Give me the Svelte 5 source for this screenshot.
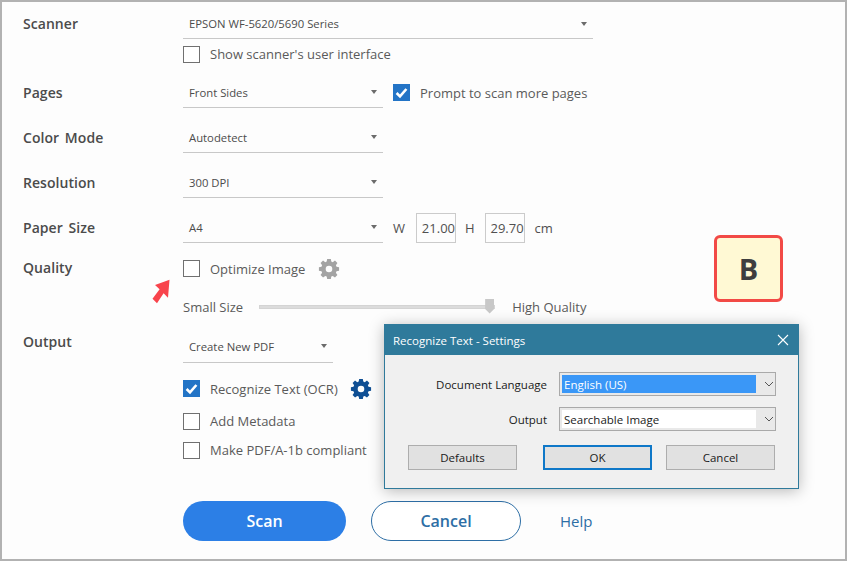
<script>
  const gear = "M10 1h4l.5 2.8 1.6.7 2.4-1.7 2.7 2.7-1.7 2.4.7 1.6 2.8.5v4l-2.8.5-.7 1.6 1.7 2.4-2.7 2.7-2.4-1.7-1.6.7-.5 2.8h-4l-.5-2.8-1.6-.7-2.4 1.7-2.7-2.7 1.7-2.4-.7-1.6-2.8-.5v-4l2.8-.5.7-1.6-1.7-2.4 2.7-2.7 2.4 1.7 1.6-.7zM12 8.4a3.6 3.6 0 1 0 0 7.2 3.6 3.6 0 0 0 0-7.2z";
</script>

{#snippet check(on, label)}
  <span class="check">
    <span class="box" class:on>
      {#if on}<svg viewBox="0 0 17 17" width="17" height="17"><path d="M3.6 9l3.4 3.4 6.4-7.4" fill="none" stroke="#fff" stroke-width="2.6"/></svg>{/if}
    </span>
    <span class="checklabel">{label}</span>
  </span>
{/snippet}

{#snippet select(text, cls)}
  <span class="select {cls}"><span>{text}</span><i class="caret"></i></span>
{/snippet}

<div class="frame">
  <div class="form">
    <div class="row r-scanner">
      <div class="label up1">Scanner</div>
      {@render select('EPSON WF-5620/5690 Series', 'wide')}
    </div>
    <div class="row r-ui">
      <div class="label"></div>
      {@render check(false, "Show scanner's user interface")}
    </div>
    <div class="row r-sel first">
      <div class="label">Pages</div>
      {@render select('Front Sides', 'mid')}
      <span class="after">{@render check(true, 'Prompt to scan more pages')}</span>
    </div>
    <div class="row r-sel">
      <div class="label">Color Mode</div>
      {@render select('Autodetect', 'mid')}
    </div>
    <div class="row r-sel">
      <div class="label">Resolution</div>
      {@render select('300 DPI', 'mid')}
    </div>
    <div class="row r-sel">
      <div class="label">Paper Size</div>
      {@render select('A4', 'mid')}
      <span class="dims">
        <span class="dim-l">W</span><span class="num">21.00</span>
        <span class="dim-h">H</span><span class="num">29.70</span>
        <span class="unit">cm</span>
      </span>
    </div>
    <div class="row r-quality">
      <div class="label up1">Quality</div>
      {@render check(false, 'Optimize Image')}
      <svg class="gear" viewBox="0 0 24 24" width="22" height="22"><path d={gear} fill="#a3a3a3" fill-rule="evenodd"/></svg>
    </div>
    <div class="row r-slider">
      <div class="label"></div>
      <span class="txt">Small Size</span>
      <span class="track"><i class="thumb"></i></span>
      <span class="txt">High Quality</span>
    </div>
    <div class="row r-output">
      <div class="label up2">Output</div>
      {@render select('Create New PDF', 'short')}
    </div>
    <div class="row r-ocr">
      <div class="label"></div>
      {@render check(true, 'Recognize Text (OCR)')}
      <svg class="gear blue" viewBox="0 0 24 24" width="22" height="22"><path d={gear} fill="#0f4f94" fill-rule="evenodd"/></svg>
    </div>
    <div class="row r-meta">
      <div class="label"></div>
      {@render check(false, 'Add Metadata')}
    </div>
    <div class="row r-pdfa">
      <div class="label"></div>
      {@render check(false, 'Make PDF/A-1b compliant')}
    </div>
    <div class="row r-actions">
      <div class="label"></div>
      <button class="btn scan">Scan</button>
      <button class="btn cancel">Cancel</button>
      <span class="help">Help</span>
    </div>
  </div>

  <div class="badge">B</div>

  <svg class="arrow a1" viewBox="0 0 20 26" width="20" height="29" preserveAspectRatio="none"><path d="M18.5 2.5 L17 18.5 L12.6 14.6 L6 23.5 L1.5 19.6 L8.6 11 L4 7.2 Z" fill="#f8444c"/></svg>
  <svg class="arrow a2" viewBox="0 0 24 18" width="24" height="18"><path d="M0 9 L13 1 V5.5 H23 V13 H13 V17.5 Z" fill="#f8444c"/></svg>

  <div class="dialog">
    <div class="titlebar">
      <span>Recognize Text - Settings</span>
      <svg viewBox="0 0 12 12" width="12" height="12"><path d="M1 1l10 10M11 1L1 11" stroke="#fff" stroke-width="1.1" fill="none"/></svg>
    </div>
    <div class="dbody">
      <div class="drow">
        <span class="dlabel">Document Language</span>
        <span class="combo"><span class="value sel">English (US)</span><svg viewBox="0 0 10 6" width="10" height="6"><path d="M1 1l4 4 4-4" stroke="#555" fill="none"/></svg></span>
      </div>
      <div class="drow two">
        <span class="dlabel">Output</span>
        <span class="combo"><span class="value">Searchable Image</span><svg viewBox="0 0 10 6" width="10" height="6"><path d="M1 1l4 4 4-4" stroke="#555" fill="none"/></svg></span>
      </div>
      <div class="dbtns">
        <button class="dbtn">Defaults</button>
        <button class="dbtn ok">OK</button>
        <button class="dbtn">Cancel</button>
      </div>
    </div>
  </div>
</div>

<style>
  :global(body) { margin: 0; background: #fff; }
  .frame {
    position: relative;
    width: 847px;
    height: 561px;
    box-sizing: border-box;
    background: #fdfdfd;
    border: 2px solid #b2b2b2;
    overflow: hidden;
    font-family: "Open Sans", "Noto Sans", sans-serif;
    font-size: 13px;
    color: #505050;
  }
  .form { padding: 0 0 0 21px; }
  .row { display: flex; align-items: center; }
  .label {
    width: 160px;
    flex: none;
    font-size: 14px;
    font-weight: 600;
    letter-spacing: .05px;
    word-spacing: 2px;
    color: #4b4b4b;
  }
  .up1 { position: relative; top: -1px; }
  .up2 { position: relative; top: -6px; }

  .select {
    box-sizing: border-box;
    flex: none;
    height: 30px;
    display: flex;
    align-items: center;
    justify-content: space-between;
    padding: 0 6px;
    border-bottom: 1px solid #c8c8c8;
    font-size: 11.3px;
    color: #4c4c4c;
  }
  .wide { width: 410px; }
  .mid { width: 200px; }
  .short { width: 150px; padding-bottom: 2px; }
  .caret {
    width: 0; height: 0;
    border: 3.5px solid transparent;
    border-top: 4px solid #6b6b6b;
    border-bottom: 0;
  }

  .check { display: inline-flex; align-items: center; }
  .box {
    box-sizing: border-box;
    width: 17px; height: 17px;
    border: 1px solid #707070;
    background: #fff;
    flex: none;
  }
  .box.on { background: #2374c6; border: 0; }
  .box svg { display: block; }
  .checklabel { margin-left: 10px; font-size: 13px; color: #5a5a5a; white-space: nowrap; }

  .r-scanner { height: 30px; padding-top: 7px; }
  .r-ui { height: 17px; margin-top: 6.5px; }
  .r-sel { height: 30px; margin-top: 15px; }
  .after { margin: 4px 0 0 10px; }
  .dims { display: inline-flex; align-items: center; margin-left: 10px; font-size: 13px; }
  .num {
    box-sizing: border-box;
    width: 40px; height: 30px;
    border: 1px solid #cbcbcb;
    display: flex; align-items: center; justify-content: flex-end;
    font-size: 13px;
  }
  .dim-l { margin-right: 11px; }
  .dim-h { margin: 0 10px 0 9px; }
  .unit { margin-left: 10px; }

  .r-quality { height: 22px; margin-top: 15px; }
  .gear { margin-left: 13px; flex: none; }
  .blue { margin-left: 12px; }
  .r-slider { height: 20px; margin-top: 17px; }
  .txt { font-size: 13px; color: #5a5a5a; white-space: nowrap; }
  .track {
    position: relative;
    box-sizing: border-box;
    width: 236px; height: 4px;
    margin: 0 17px 0 16px;
    background: #dcdcdc;
    border: 1px solid #d4d4d4;
  }
  .thumb {
    position: absolute;
    right: 0; top: -7px;
    width: 9px; height: 15px;
    background: #c8c8c8;
    clip-path: polygon(0 0, 100% 0, 100% 70%, 50% 100%, 0 70%);
  }
  .r-output { height: 30px; margin-top: 16px; }
  .r-ocr { height: 22px; margin-top: 15px; }
  .r-meta { height: 17px; margin-top: 13px; }
  .r-pdfa { height: 17px; margin-top: 12px; }
  .r-actions { height: 40px; margin-top: 42px; }
  .btn {
    box-sizing: border-box;
    height: 40px;
    border-radius: 20px;
    font: 600 16px "Open Sans", "Noto Sans", sans-serif;
    padding: 0;
  }
  .scan { width: 163px; background: #2c7fe6; border: 0; color: #fff; }
  .cancel { width: 150px; margin-left: 25px; background: #fff; border: 1.5px solid #2d6ea5; color: #2d6ea5; }
  .help { margin-left: 39px; font-size: 15px; color: #2d6ea5; }

  .badge {
    position: absolute;
    left: 712px; top: 233px;
    box-sizing: border-box;
    width: 69px; height: 67px;
    border: 3px solid #f24a46;
    border-radius: 6px;
    background: #fff9d4;
    display: flex; align-items: center; justify-content: center;
    font-size: 29px; font-weight: 700; color: #3e3e3e;
  }
  .arrow { position: absolute; }
  .a1 { left: 149px; top: 275px; }
  .a2 { left: 390px; top: 375px; }

  .dialog {
    position: absolute;
    left: 382px; top: 322px;
    box-sizing: border-box;
    width: 415px; height: 165px;
    background: #f0f0f0;
    border: 1px solid #2f7a9b;
    box-shadow: 0 2px 14px rgba(0,0,0,.28);
    color: #1a1a1a;
    font-size: 11.5px;
  }
  .titlebar {
    height: 30px;
    background: #2f7a9b;
    color: #fff;
    display: flex; align-items: center; justify-content: space-between;
    padding: 0 9px 0 8px;
  }
  .dbody { padding-top: 17px; }
  .drow { display: flex; align-items: center; height: 24px; }
  .drow.two { margin-top: 11px; }
  .dlabel { width: 162px; text-align: right; flex: none; }
  .combo {
    box-sizing: border-box;
    width: 217px; height: 24px;
    margin-left: 12px;
    border: 1px solid #a9a9a9;
    background: #e9e9e9;
    display: flex; align-items: center;
    padding: 2px 0 2px 2px;
  }
  .combo svg { margin-left: 8px; }
  .value {
    box-sizing: border-box;
    width: 194px; height: 100%;
    display: flex; align-items: center;
    padding-left: 2px;
    background: #fff;
  }
  .value.sel { background: #3a97f7; color: #fff; }
  .dbtns { display: flex; margin: 14px 0 0 23px; }
  .dbtn {
    box-sizing: border-box;
    width: 109px; height: 25px;
    border: 1px solid #adadad;
    background: #e1e1e1;
    font: 11.5px "Open Sans", "Noto Sans", sans-serif;
    color: #1a1a1a;
    padding: 0;
  }
  .dbtn.ok { margin: 0 14px 0 26px; border: 2px solid #0f78c8; }
</style>
